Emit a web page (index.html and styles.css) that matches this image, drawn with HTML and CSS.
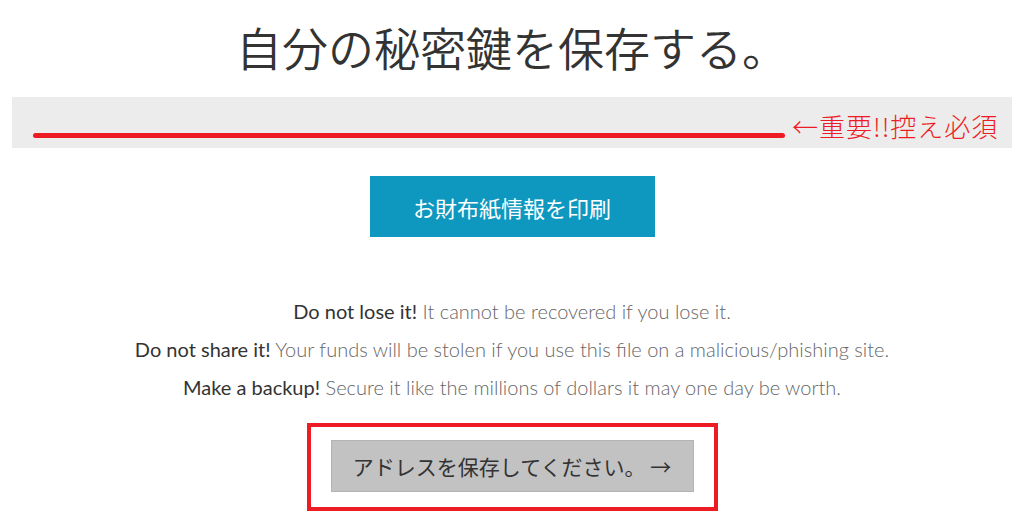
FILE: index.html
```html
<!DOCTYPE html>
<html lang="ja">
<head>
    <meta charset="UTF-8">
    <meta name="viewport" content="width=device-width, initial-scale=1.0">
    <title>秘密鍵を保存</title>
    <link rel="stylesheet" href="styles.css">
</head>
<body>
    <div class="container">
        <h1>自分の秘密鍵を保存する。</h1>
        <div class="key-bar">
            <span class="key-line"></span>
            <span class="key-note">←重要!!控え必須</span>
        </div>
        <div class="print-row">
            <button class="btn-print">お財布紙情報を印刷</button>
        </div>
        <div class="warnings">
            <p><strong>Do not lose it!</strong> It cannot be recovered if you lose it.</p>
            <p><strong>Do not share it!</strong> Your funds will be stolen if you use this file on a malicious/phishing site.</p>
            <p><strong>Make a backup!</strong> Secure it like the millions of dollars it may one day be worth.</p>
        </div>
        <div class="save-row">
            <div class="highlight">
                <button class="btn-save">アドレスを保存してください。 →</button>
            </div>
        </div>
    </div>
</body>
</html>
```

FILE: styles.css
```css
body {
    margin: 0;
    font-family: Lato, "Noto Sans CJK JP", sans-serif;
    color: #333;
    background: #fff;
}
.container {
    width: 1000px;
    margin-left: 12px;
    text-align: center;
}
h1 {
    margin: 0;
    padding-top: 19px;
    font-family: "Noto Sans CJK JP", sans-serif;
    font-size: 46px;
    font-weight: 350;
    line-height: 55px;
    color: #333;
}
.key-bar {
    margin-top: 23px;
    height: 51px;
    background-color: #ececec;
    display: flex;
    align-items: flex-end;
    padding-left: 21px;
    padding-bottom: 10px;
    box-sizing: border-box;
}
.key-line {
    display: block;
    width: 752px;
    height: 5px;
    border-radius: 3px;
    background-color: #ed1c24;
}
.key-note {
    margin-left: 7px;
    margin-bottom: -2px;
    font-family: "Noto Sans CJK JP", sans-serif;
    font-size: 26px;
    font-weight: 300;
    letter-spacing: 1px;
    line-height: 28px;
    color: #ed1c24;
}
.print-row {
    margin-top: 28px;
}
button {
    font-family: "Noto Sans CJK JP", sans-serif;
    cursor: pointer;
}
.btn-print {
    width: 285px;
    height: 61px;
    border: none;
    background-color: #0e98c0;
    color: #fff;
    font-size: 22px;
}
.warnings {
    margin-top: 55px;
    font-size: 20px;
    font-weight: 300;
    line-height: 38px;
    color: #666;
}
.warnings p {
    margin: 0;
}
.warnings strong {
    color: #333;
    font-weight: 400;
}
.save-row {
    margin-top: 17px;
}
.highlight {
    display: inline-block;
    border: 4px solid #ed1c24;
    padding: 13px 20px 15px;
}
.btn-save {
    display: block;
    width: 363px;
    height: 52px;
    border: 1px solid #b4b4b4;
    background-color: #c2c2c2;
    color: #333;
    font-size: 21px;
}
```
